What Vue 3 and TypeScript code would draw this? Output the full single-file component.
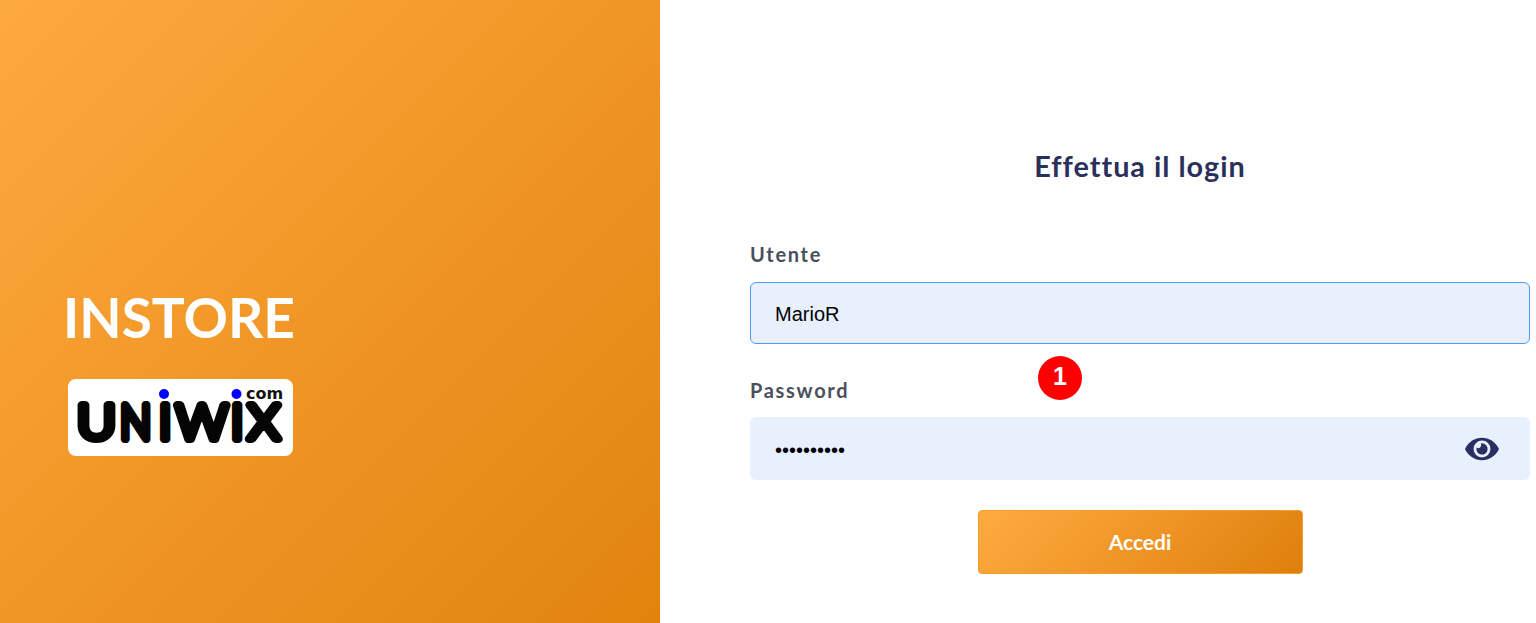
<template>
  <div class="login-page">
    <aside class="brand">
      <h1>INSTORE</h1>
      <div class="logo">
        <svg viewBox="0 0 225 77" width="225" height="77" role="img" aria-label="Uniwix.com">
          <text
            v-for="glyph in logoGlyphs"
            :key="glyph.x"
            class="logo-letter"
            :transform="`translate(${glyph.x} 60) scale(${glyph.scale} 1)`"
          >{{ glyph.char }}</text>
          <circle cx="96" cy="15" r="5" fill="#0000ff" />
          <circle cx="168.500" cy="15" r="5" fill="#0000ff" />
          <text class="logo-com" x="196.500" y="20">com</text>
        </svg>
      </div>
    </aside>

    <main class="panel">
      <form class="login-form" @submit.prevent>
        <h2>Effettua il login</h2>

        <label for="user">Utente</label>
        <input id="user" v-model="username" class="field focused" type="text" />

        <label for="pass" class="second">Password</label>
        <div class="password-wrap">
          <input id="pass" v-model="password" class="field" type="password" />
          <svg class="eye" viewBox="0 0 576 512" width="34" height="30" aria-hidden="true">
            <path
              fill="#2a2f63"
              d="M572.52 241.4C518.29 135.59 410.93 64 288 64S57.68 135.64 3.48 241.41a32.35 32.35 0 0 0 0 29.19C57.71 376.41 165.07 448 288 448s230.32-71.64 284.52-177.41a32.35 32.35 0 0 0 0-29.19zM288 400a144 144 0 1 1 144-144 143.93 143.93 0 0 1-144 144zm0-240a95.31 95.31 0 0 0-25.31 3.79 47.85 47.85 0 0 1-66.9 66.9A95.78 95.78 0 1 0 288 160z"
            />
          </svg>
        </div>

        <button type="submit">Accedi</button>
        <span class="step-badge">1</span>
      </form>
    </main>
  </div>
</template>

<script setup lang="ts">
import { ref } from 'vue'

const username = ref('MarioR')
const password = ref('mariorossi')

const logoGlyphs = [
  { char: 'U', x: 9, scale: 1.14 },
  { char: 'N', x: 52, scale: 0.88 },
  { char: 'I', x: 91, scale: 1 },
  { char: 'W', x: 108, scale: 1.08 },
  { char: 'I', x: 163, scale: 1 },
  { char: 'X', x: 180, scale: 1.08 }
]
</script>

<style>
body {
  margin: 0;
  background: #fff;
}
</style>

<style scoped>
.login-page {
  display: flex;
  height: 623px;
  overflow: hidden;
  font-family: Lato, 'Liberation Sans', sans-serif;
}

.brand {
  flex: 0 0 660px;
  box-sizing: border-box;
  padding: 283px 0 0 63px;
  background: linear-gradient(135deg, #fea93e 0%, #e2830f 100%);
}

.brand h1 {
  margin: 0;
  font-size: 55px;
  line-height: 68px;
  font-weight: 700;
  color: #fff;
}

.logo {
  width: 225px;
  height: 77px;
  margin: 28px 0 0 5px;
  border-radius: 8px;
  background: #fff;
}

.logo svg {
  display: block;
}

.logo-letter {
  font-family: Lato, sans-serif;
  font-size: 47px;
  font-weight: 300;
  fill: #050505;
  stroke: #050505;
  stroke-width: 8px;
  stroke-linejoin: round;
  stroke-linecap: round;
}

.logo-com {
  font-family: 'DejaVu Sans', sans-serif;
  font-size: 16px;
  font-weight: 700;
  text-anchor: middle;
  fill: #111;
}

.panel {
  flex: 1;
  padding: 0 6px 0 90px;
}

.login-form {
  position: relative;
  display: flex;
  flex-direction: column;
  padding-top: 148px;
}

h2 {
  margin: 0 0 58px;
  font-size: 28.8px;
  line-height: 36px;
  font-weight: 700;
  letter-spacing: 1px;
  text-align: center;
  color: #2a2f5b;
}

label {
  margin-bottom: 16px;
  font-size: 20px;
  line-height: 24px;
  font-weight: 700;
  letter-spacing: 1.7px;
  color: #4a4f5c;
}

label.second {
  margin-top: 34px;
  margin-bottom: 15px;
}

.field {
  display: block;
  box-sizing: border-box;
  width: 100%;
  height: 62px;
  padding: 2px 24px 0;
  border: 1px solid transparent;
  border-radius: 6px;
  outline: none;
  background: #e8f0fe;
  font-family: 'Liberation Sans', Arial, sans-serif;
  font-size: 20px;
  color: #000;
}

.field.focused {
  border-color: #4d9cf8;
}

.password-wrap {
  position: relative;
}

.password-wrap .field {
  height: 63px;
  padding-top: 3px;
}

.eye {
  position: absolute;
  top: 17px;
  right: 31px;
}

button {
  align-self: center;
  width: 325px;
  height: 64px;
  margin-top: 30px;
  padding-bottom: 3px;
  border: 1px solid #f59d30;
  border-radius: 4px;
  background: linear-gradient(135deg, #ffab40 0%, #df7f0c 100%);
  font-family: Lato, sans-serif;
  font-size: 21px;
  font-weight: 700;
  color: #fff;
}

.step-badge {
  position: absolute;
  top: 356px;
  left: 288px;
  width: 44px;
  height: 44px;
  border-radius: 50%;
  background: #ff0000;
  font-family: 'Liberation Sans', Arial, sans-serif;
  font-size: 25px;
  font-weight: 700;
  line-height: 41px;
  text-align: center;
  color: #fff;
}
</style>
